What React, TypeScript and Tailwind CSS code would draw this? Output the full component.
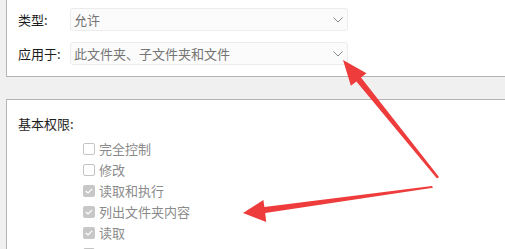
import React from "react";

const font = { fontFamily: '"Noto Sans CJK SC", "Noto Sans", sans-serif' };

function Chevron() {
    return (
        <svg width="10" height="6" viewBox="0 0 10 6" className="shrink-0">
            <path d="M0.5 0.5 L5 5 L9.5 0.5" fill="none" stroke="#8a8a8a" strokeWidth="1" />
        </svg>
    );
}

function Combo({ value }: { value: string }) {
    return (
        <div className="flex items-center justify-between w-[278px] h-[23px] pl-[3px] pr-[4px] bg-[#fbfbfb] border border-[#ececec] rounded-[3px]">
            <span className="text-[13px] leading-none text-[#747474]">{value}</span>
            <Chevron />
        </div>
    );
}

function Check({ checked, label }: { checked: boolean; label: string }) {
    return (
        <div className="flex items-center h-[21px] pl-[65px] shrink-0">
            {checked ? (
                <span className="flex items-center justify-center w-[12px] h-[12px] rounded-[2px] bg-[#c7c7c7]">
                    <svg width="8" height="6" viewBox="0 0 8 6">
                        <path d="M0.8 3 L3 5 L7.2 0.8" fill="none" stroke="#ffffff" strokeWidth="1.2" />
                    </svg>
                </span>
            ) : (
                <span className="w-[12px] h-[12px] rounded-[2px] border border-[#c4c4c4] bg-white" />
            )}
            <span className="ml-[4px] text-[13px] leading-none text-[#8a8a8a]">{label}</span>
        </div>
    );
}

export default function App() {
    const perms = [
        { label: "完全控制", checked: false },
        { label: "修改", checked: false },
        { label: "读取和执行", checked: true },
        { label: "列出文件夹内容", checked: true },
        { label: "读取", checked: true },
        { label: "写入", checked: false },
    ];

    return (
        <div className="relative w-[505px] h-[249px] overflow-hidden bg-[#f0f0f0] flex flex-col" style={font}>
            {/* top panel */}
            <div className="shrink-0 ml-[6px] h-[77px] bg-white border-l border-b border-[#b4b4b4] pl-[11px] pt-[8px] flex flex-col gap-[11px]">
                <div className="flex items-center">
                    <span className="w-[52px] text-[13px] leading-none text-[#1c1c1c]">类型:</span>
                    <Combo value="允许" />
                </div>
                <div className="flex items-center">
                    <span className="w-[52px] text-[13px] leading-none text-[#1c1c1c]">应用于:</span>
                    <Combo value="此文件夹、子文件夹和文件" />
                </div>
            </div>

            {/* permissions panel */}
            <div className="ml-[6px] mt-[22px] flex-1 min-h-0 overflow-hidden bg-white border-l border-t border-[#b4b4b4] pl-[11px] pt-[14px]">
                <div className="h-[20px] flex items-center text-[13px] text-[#1c1c1c]">基本权限:</div>
                <div className="mt-[4px] flex flex-col">
                    {perms.map((p) => (
                        <Check key={p.label} checked={p.checked} label={p.label} />
                    ))}
                </div>
            </div>

            {/* annotation arrows */}
            <svg className="absolute inset-0 pointer-events-none" width="505" height="249" viewBox="0 0 505 249">
                <polygon
                    fill="#ee3b3b"
                    points="343,60 366.5,73.2 361,77.6 439,177 437,178.5 356.4,81.4 350.9,85.8"
                />
                <polygon
                    fill="#ee3b3b"
                    points="243,213 263.4,200.1 264.4,207 432,186 433,187.8 265.2,213 266.2,221.9"
                />
            </svg>
        </div>
    );
}
